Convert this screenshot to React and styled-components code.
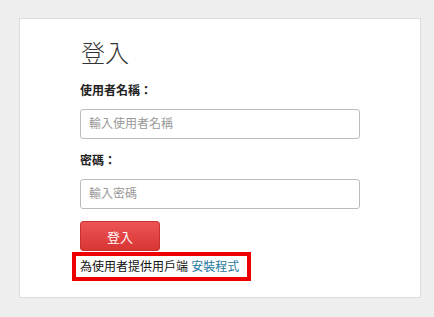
import React from 'react';
import styled, { createGlobalStyle } from 'styled-components';

const GlobalStyle = createGlobalStyle`
  html, body {
    margin: 0;
    padding: 0;
    background: #eeeeee;
    font-family: "Liberation Sans", Arial, "Noto Sans CJK TC", sans-serif;
    color: #222;
  }
`;

const Page = styled.div`
  padding: 18px 14px 20px 19px;
`;

const Card = styled.div`
  box-sizing: border-box;
  width: 402px;
  height: 280px;
  background: #fff;
  border: 1px solid #dddddd;
  padding: 20px 0 0 60px;
`;

const Title = styled.h1`
  margin: 0 0 13px 1px;
  font-size: 24px;
  line-height: 30px;
  font-weight: 300;
  color: #333;
`;

const Label = styled.label`
  display: block;
  font-size: 12px;
  line-height: 18px;
  font-weight: bold;
  color: #222;
  margin-bottom: ${p => p.gap || 9}px;
`;

const Input = styled.input`
  display: block;
  box-sizing: border-box;
  width: 280px;
  height: 30px;
  margin: 0 0 13px;
  padding: 0 8px;
  border: 1px solid #bbbbbb;
  border-radius: 3px;
  font-family: inherit;
  font-size: 12px;
  color: #333;
  outline: none;
  &::placeholder {
    color: #999;
  }
`;

const Button = styled.button`
  display: block;
  box-sizing: border-box;
  width: 80px;
  height: 30px;
  margin-top: -1px;
  border: 1px solid #c93030;
  border-radius: 3px;
  background: linear-gradient(#ec5454, #d93535);
  color: #fff;
  font-family: inherit;
  font-size: 13px;
  cursor: pointer;
`;

const Highlight = styled.div`
  display: inline-block;
  margin: 1px 0 0 -8px;
  padding: 1px 8px 0 4px;
  border: 4px solid #ee0000;
  font-size: 12px;
  line-height: 20px;
  color: #111;
`;

const Link = styled.a`
  color: #1f7aa0;
  text-decoration: none;
`;

export default function App() {
  return (
    <>
      <GlobalStyle />
      <Page>
        <Card>
          <Title>登入</Title>
          <Label>使用者名稱：</Label>
          <Input placeholder="輸入使用者名稱" />
          <Label>密碼：</Label>
          <Input type="password" placeholder="輸入密碼" />
          <Button>登入</Button>
          <Highlight>
            為使用者提供用戶端 <Link href="#">安裝程式</Link>
          </Highlight>
        </Card>
      </Page>
    </>
  );
}
